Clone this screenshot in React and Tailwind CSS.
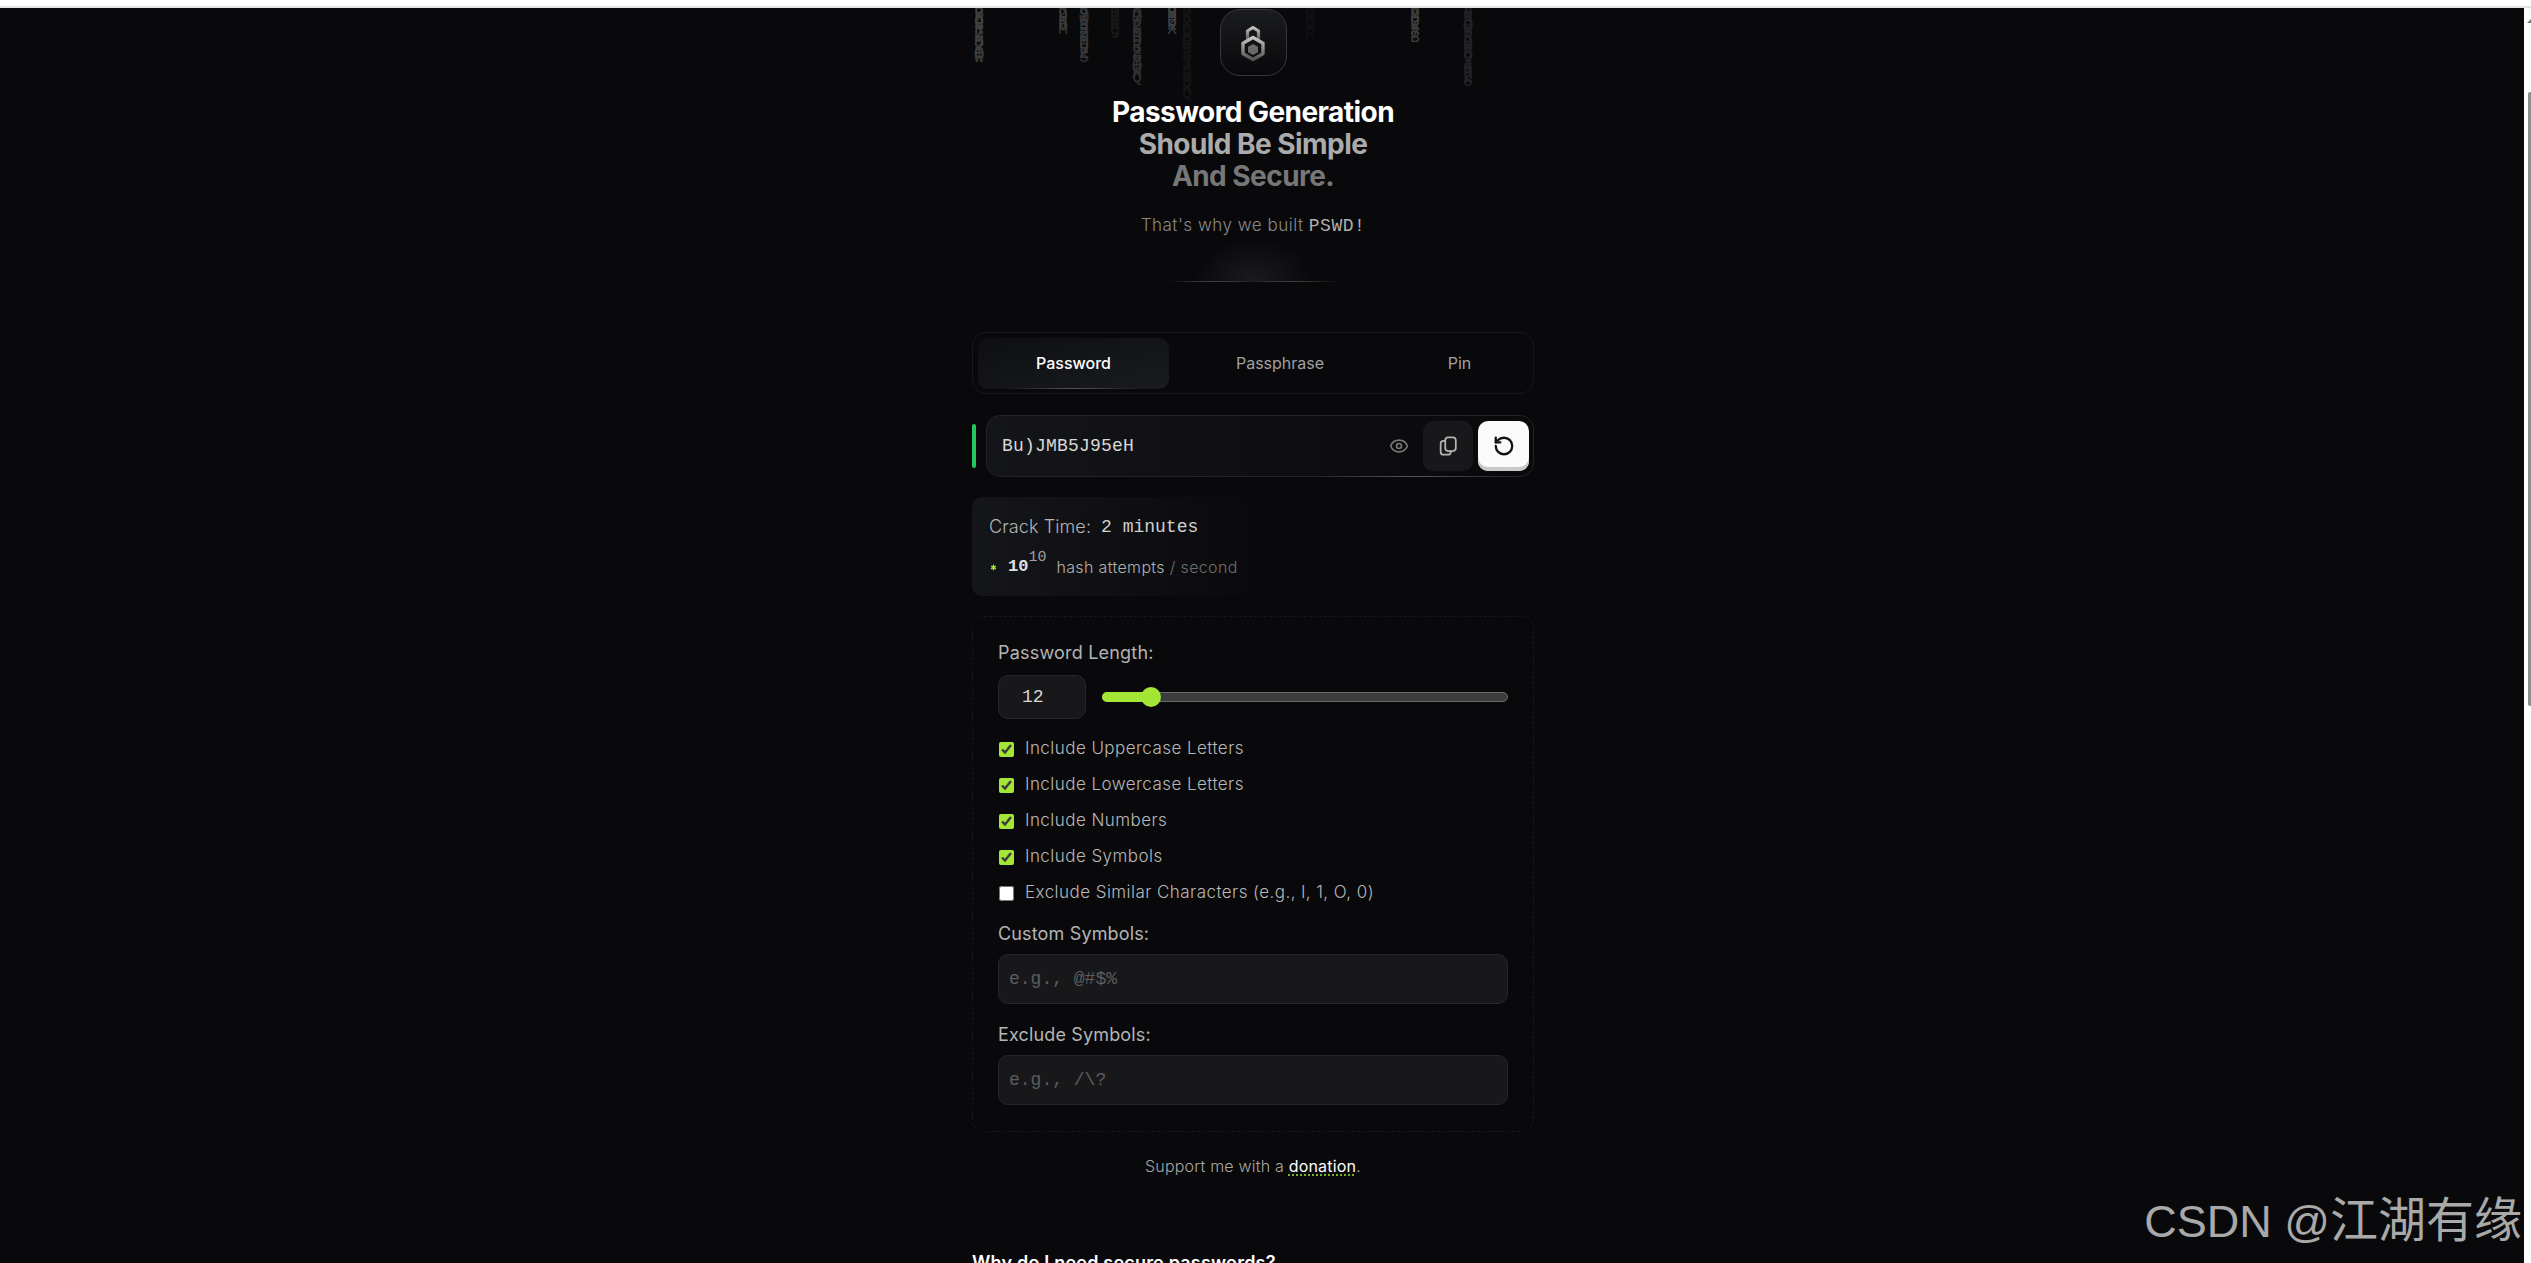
import { Eye, RotateCcw, Asterisk } from "lucide-react";

const inter = "font-['Inter','Noto_Sans',sans-serif]";
const mono = "font-['Liberation_Mono','DejaVu_Sans_Mono',monospace]";

const rain = [
  { x: 1, h: 52, o: 0.38, s: "8BXQ#R7KM2YBW9" },
  { x: 85, h: 27, o: 0.34, s: "R2HK8MW" },
  { x: 106, h: 54, o: 0.32, s: "K9XW3B7RMQ8Z5A" },
  { x: 137, h: 30, o: 0.1, s: "M3B8KQ9W" },
  { x: 159, h: 72, o: 0.28, s: "XQ7W2KMB9R4Z8YHW" },
  { x: 194, h: 27, o: 0.38, s: "Q8M2RX9K" },
  { x: 209, h: 88, o: 0.08, s: "B7K2XQ9MRW3Z8Y4HBKM2XQ" },
  { x: 332, h: 30, o: 0.05, s: "H9KQ2MR7" },
  { x: 437, h: 32, o: 0.36, s: "W2M9KX7B" },
  { x: 490, h: 76, o: 0.18, s: "Z8K3QW7R2MXB9Y4KHZ8Q" },
];

const checks = [
  { label: "Include Uppercase Letters", on: true },
  { label: "Include Lowercase Letters", on: true },
  { label: "Include Numbers", on: true },
  { label: "Include Symbols", on: true },
  { label: "Exclude Similar Characters (e.g., l, 1, O, 0)", on: false },
];

function RainColumn({ col }) {
  return (
    <div
      className={`absolute top-0 w-[12px] break-all text-center text-[16px] leading-[4px] text-[#9a9a9a] ${mono}`}
      style={{ left: col.x, opacity: col.o }}
    >
      {col.s.repeat(4).slice(0, Math.floor(col.h / 4))}
    </div>
  );
}

function LockLogo() {
  return (
    <svg width="30" height="38" viewBox="0 0 30 38" fill="none">
      <defs>
        <linearGradient id="lockGrad" x1="0" y1="0" x2="0" y2="1">
          <stop offset="0" stopColor="#c4c4c4" />
          <stop offset="1" stopColor="#555555" />
        </linearGradient>
      </defs>
      <path d="M9.5 16V7L15 3.5 20.5 7v9" stroke="url(#lockGrad)" strokeWidth="3.2" strokeLinejoin="round" />
      <path d="M15 13.5 25 19.2v10.6L15 35.5 5 29.8V19.2Z" stroke="url(#lockGrad)" strokeWidth="3.4" strokeLinejoin="round" />
      <path d="M15 20 20 22.8v5.4L15 31l-5-2.8v-5.4Z" fill="#6a6a6a" />
    </svg>
  );
}

function CopyIcon() {
  return (
    <svg width="22" height="22" viewBox="0 0 24 24" fill="none" stroke="currentColor" strokeWidth="1.9" strokeLinecap="round" strokeLinejoin="round">
      <rect x="9" y="2.5" width="11.5" height="15" rx="3.2" />
      <path d="M9 6.5H7A3 3 0 0 0 4 9.5v9A3 3 0 0 0 7 21.5h5a3 3 0 0 0 3-3V17.5" />
    </svg>
  );
}

function CheckRow({ item }) {
  return (
    <label className="flex h-[36px] items-center gap-[12px]">
      <input
        type="checkbox"
        checked={item.on}
        readOnly
        className="m-0 ml-px h-[15px] w-[15px] accent-[#a3e635]"
      />
      <span className="-ml-px text-[17px] font-light tracking-[0.45px] text-[#b8b8b8]">{item.label}</span>
    </label>
  );
}

function TextField({ label, placeholder, className }) {
  return (
    <div className={className}>
      <div className="text-[18px] leading-[24px] tracking-[0.15px] text-[#b4b4b4]">{label}</div>
      <input
        readOnly
        placeholder={placeholder}
        className={`mt-[8px] block h-[50px] w-full rounded-[10px] border border-[#27272a] bg-[#18181b] px-[10px] text-[18px] outline-none placeholder:text-[#5c5c5c] ${mono}`}
      />
    </div>
  );
}

export default function App() {
  return (
    <div className={`flex h-[1263px] flex-col overflow-hidden bg-white ${inter}`}>
      <div className="h-[6px] shrink-0 bg-white" />
      <div className="h-[2px] shrink-0 bg-[#e4e4e4]" />
      <div className="flex min-h-0 flex-1">
        <main className="relative flex min-w-0 flex-1 justify-center overflow-hidden bg-[#09090b] pr-[18px]">
          <div className="relative w-[562px] shrink-0">
            <div className="absolute inset-x-0 top-0 h-[100px]">
              {rain.map((col) => (
                <RainColumn key={col.x} col={col} />
              ))}
            </div>

            <div className="relative mx-auto mt-[1px] flex h-[67px] w-[67px] items-center justify-center rounded-[20px] border border-[#36373a] bg-gradient-to-b from-[#1b1c1f] to-[#09090b]">
              <LockLogo />
            </div>

            <h1 className="relative mt-[20px] text-center text-[28px] font-bold leading-[32px] tracking-[-0.55px]">
              <span className="block text-white">Password Generation</span>
              <span className="block text-[#ababab]">Should Be Simple</span>
              <span className="block text-[#777777]">And Secure.</span>
            </h1>

            <p className="mt-[21px] text-center text-[17px] font-light leading-[24px] tracking-[0.5px] text-[#8a8a8a]">
              That's why we built <span className={`text-[18px] leading-[20px] text-[#b0b0b0] ${mono}`}>PSWD!</span>
            </p>

            <div className="relative mx-auto mt-[44px] h-px w-[170px] bg-gradient-to-r from-transparent via-[#8a8a8a] to-transparent">
              <div className="absolute bottom-0 left-1/2 h-[45px] w-[120px] -translate-x-1/2 bg-[radial-gradient(ellipse_at_bottom,#1a1b1e,transparent_70%)]" />
            </div>

            <div className="relative mt-[50px] flex h-[62px] items-center rounded-[14px] border border-[#18181b] p-[5px]">
              <div className="relative flex h-[51px] w-[191px] items-center justify-center rounded-[10px] bg-gradient-to-br from-[#0e0f12] to-[#1a1b1e] text-[16px] font-medium text-white">
                Password
                <div className="absolute inset-x-[30px] bottom-0 h-px bg-gradient-to-r from-transparent via-[#55565c] to-transparent" />
              </div>
              <div className="flex h-[51px] w-[222px] items-center justify-center text-[16px] text-[#a0a0a0]">
                Passphrase
              </div>
              <div className="flex h-[51px] flex-1 items-center justify-center text-[16px] text-[#a0a0a0]">
                Pin
              </div>
            </div>

            <div className="mt-[21px] flex items-center gap-[10px]">
              <div className="h-[44px] w-[4px] rounded-full bg-[#22c55e]" />
              <div className="relative flex h-[62px] flex-1 items-center rounded-[14px] border border-[#232327] bg-gradient-to-r from-[#141518] to-[#09090b] pl-[15px] pr-[4px]">
                <span className={`flex-1 text-[18px] tracking-[0.2px] text-[#d8d8d8] ${mono}`}>Bu)JMB5J95eH</span>
                <Eye size={20} strokeWidth={2} className="mr-[14px] text-[#7a7a7a]" />
                <button className="flex h-[50px] w-[50px] items-center justify-center rounded-[10px] bg-[#18181b] text-[#b4b4b4]">
                  <CopyIcon />
                </button>
                <button className="ml-[5px] flex h-[50px] w-[51px] items-center justify-center rounded-[10px] bg-[#fafafa] text-[#111] shadow-[inset_0_-4px_0_#c9c9c9]">
                  <RotateCcw size={22} strokeWidth={2.5} />
                </button>
                <div className="absolute bottom-[-1px] right-[20px] h-px w-[200px] bg-gradient-to-r from-transparent via-[#55565c] to-transparent" />
              </div>
            </div>

            <div className="mt-[20px] h-[99px] w-[300px] rounded-l-[10px] bg-gradient-to-r from-[#15161a] to-[#09090b] pl-[17px] pt-[18px]">
              <div className="flex items-center gap-[10px] leading-[24px]">
                <span className="text-[18px] font-light tracking-[0.1px] text-[#b4b4b4]">Crack Time:</span>
                <span className={`text-[18px] text-[#d0d0d0] ${mono}`}>2 minutes</span>
              </div>
              <div className="mt-[16px] flex items-center leading-[24px]">
                <Asterisk size={9} strokeWidth={3.5} className="text-[#a3e635]" />
                <span className={`ml-[10px] text-[17px] font-bold text-[#e0e0e0] ${mono}`}>10</span>
                <sup className={`-mt-[4px] text-[15px] text-[#a0a0a0] ${mono}`}>10</sup>
                <span className="ml-[10px] text-[16px] font-light tracking-[0.35px] text-[#b0b0b0]">
                  hash attempts <span className="text-[#6f6f6f]">/ second</span>
                </span>
              </div>
            </div>

            <section className="mt-[20px] h-[516px] rounded-[12px] border border-dashed border-[#18181b] px-[25px] pt-[24px]">
              <div className="text-[18px] leading-[24px] tracking-[0.2px] text-[#b4b4b4]">Password Length:</div>
              <div className="mt-[10px] flex items-center gap-[16px]">
                <div className={`flex h-[44px] w-[88px] items-center rounded-[10px] border border-[#27272a] bg-[#18181b] pl-[23px] text-[18px] text-[#d8d8d8] ${mono}`}>
                  12
                </div>
                <div className="relative h-[10px] flex-1 rounded-full border border-[#6a6a6a] bg-[#3d3d3d]">
                  <div className="absolute -inset-y-px -left-px w-[50px] rounded-full bg-[#a3e635]" />
                  <div className="absolute left-[38px] top-1/2 h-[20px] w-[20px] -translate-y-1/2 rounded-full bg-[#a3e635]" />
                </div>
              </div>
              <div className="mt-[12px]">
                {checks.map((item) => (
                  <CheckRow key={item.label} item={item} />
                ))}
              </div>
              <TextField className="mt-[11px]" label="Custom Symbols:" placeholder="e.g., @#$%" />
              <TextField className="mt-[19px]" label="Exclude Symbols:" placeholder="e.g., /\?" />
            </section>

            <p className="mt-[22px] text-center text-[16px] font-light leading-[24px] tracking-[0.2px] text-[#a8a8a8]">
              Support me with a{" "}
              <a className="font-normal text-white underline decoration-[#a3e635] decoration-dotted underline-offset-[3px]">
                donation
              </a>
              .
            </p>

            <h2 className="mt-[71px] text-[18px] font-semibold leading-[28px] tracking-[0.2px] text-white">
              Why do I need secure passwords?
            </h2>
          </div>

          <div className="absolute bottom-[13px] right-[2px] whitespace-nowrap font-['Liberation_Sans','Noto_Sans_CJK_SC',sans-serif] text-[45px] leading-[56px] text-[#a9a9a9]">
            CSDN @<span className="text-[48px]">江湖有缘</span>
          </div>
        </main>

        <div className="relative w-[7px] shrink-0 bg-white">
          <div className="absolute right-0 top-[84px] h-[614px] w-[3px] rounded-l-[2px] bg-[#8f8f8f]" />
          <div className="absolute right-0 top-[11px] h-0 w-0 border-b-[4px] border-l-[4px] border-b-[#777777] border-l-transparent" />
        </div>
      </div>
    </div>
  );
}
